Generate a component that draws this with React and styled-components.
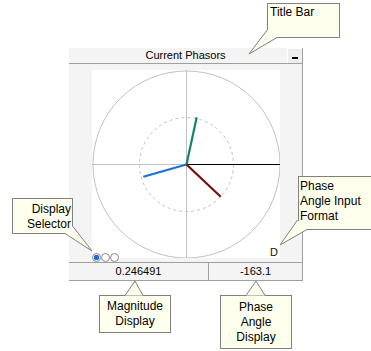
import React from "react";
import styled, { createGlobalStyle } from "styled-components";

const GlobalStyle = createGlobalStyle`
  html, body {
    margin: 0;
    padding: 0;
    background: #ffffff;
  }
  body {
    font-family: "Liberation Sans", Arial, sans-serif;
  }
`;

const Stage = styled.div`
  position: relative;
  width: 371px;
  height: 351px;
  overflow: hidden;
  padding: 48px 0 0 69px;
  box-sizing: border-box;
`;

const Panel = styled.div`
  width: 234px;
  box-sizing: border-box;
  border-right: 1px solid #a0a0a0;
  background: #f4f4f4;
`;

const TitleBar = styled.div`
  display: flex;
  height: 16px;
  box-sizing: border-box;
  border-bottom: 1px solid #a0a0a0;
`;

const Spacer = styled.div`
  width: 15px;
`;

const Title = styled.div`
  flex: 1;
  text-align: center;
  font-size: 11px;
  line-height: 15px;
  color: #000;
`;

const MinButton = styled.div`
  width: 15px;
  height: 15px;
  box-sizing: border-box;
  border-top: 1px solid #ffffff;
  border-left: 1px solid #ffffff;
  background: #ededed;
  display: flex;
  align-items: center;
  justify-content: center;

  &::after {
    content: "";
    width: 6px;
    height: 2px;
    margin-top: 3px;
    background: #000;
  }
`;

const Body = styled.div`
  position: relative;
  height: 198px;
  box-sizing: border-box;
  padding: 6px 22px 4px 23px;
`;

const Plot = styled.svg`
  display: block;
  background: #ffffff;
`;

const Selector = styled.div`
  position: absolute;
  left: 23px;
  bottom: 0px;
  display: flex;
`;

const Dot = styled.div`
  width: 9px;
  height: 9px;
  box-sizing: border-box;
  border-radius: 50%;
  border: 1px solid #8c8c8c;
  background: ${(p) => (p.$active ? "radial-gradient(circle, #1d6fd6 0 2.6px, #ffffff 3px)" : "#ffffff")};
`;

const FormatLabel = styled.div`
  position: absolute;
  right: 24px;
  bottom: 4px;
  font-size: 11px;
  line-height: 11px;
  color: #111;
`;

const Footer = styled.div`
  display: flex;
  height: 19px;
  box-sizing: border-box;
  border-top: 1px solid #a0a0a0;
  border-bottom: 1px solid #a0a0a0;
`;

const Cell = styled.div`
  width: ${(p) => p.$width}px;
  border-right: ${(p) => (p.$divider ? "1px solid #a0a0a0" : "none")};
  text-align: center;
  font-size: 11px;
  line-height: 17px;
  color: #000;
`;

const Callout = styled.div`
  position: absolute;
  left: ${(p) => p.$x}px;
  top: ${(p) => p.$y}px;
  width: ${(p) => p.$w}px;
  height: ${(p) => p.$h}px;
  box-sizing: border-box;
  border: 1px solid #808080;
  background: #ffffee;
  font-size: 12px;
  line-height: 15px;
  color: #000;
  padding: ${(p) => p.$pad || "1px 2px"};
  text-align: ${(p) => p.$align || "left"};
  display: flex;
  flex-direction: column;
  justify-content: ${(p) => (p.$center ? "center" : "flex-start")};
`;

const Tails = styled.svg`
  position: absolute;
  left: 0;
  top: 0;
  pointer-events: none;
`;

const tails = [
  [[267.5, 29.5], [249, 54], [277, 37.5]],
  [[65, 233.5], [92, 251], [72.5, 226]],
  [[297.5, 220], [280, 245], [307, 229.5]],
  [[125, 295.5], [135, 281], [143, 295.5]],
  [[246, 295.5], [256, 281], [265, 295.5]],
];

const cx = 94.5;
const cy = 94.5;

const phasors = [
  { x: 104.7, y: 47.3, color: "#13836a" },
  { x: 51.3, y: 106.7, color: "#1b72d6" },
  { x: 128.7, y: 126.7, color: "#7a0c0c" },
];

const App = () => {
  return (
    <>
      <GlobalStyle />
      <Stage>
        <Panel>
          <TitleBar>
            <Spacer />
            <Title>Current Phasors</Title>
            <MinButton />
          </TitleBar>
          <Body>
            <Plot width="188" height="188" viewBox="0 0 188 188">
              <circle cx={cx} cy={cy} r="93.5" fill="none" stroke="#c4c0c0" strokeWidth="1" />
              <circle cx={cx} cy={cy} r="47" fill="none" stroke="#c4c0c0" strokeWidth="1" strokeDasharray="3 3" />
              <line x1={cx} y1="0" x2={cx} y2="188" stroke="#c4c0c0" strokeWidth="1" />
              <line x1="0" y1={cy} x2={cx} y2={cy} stroke="#c4c0c0" strokeWidth="1" />
              <line x1={cx} y1={cy} x2="188" y2={cy} stroke="#000" strokeWidth="1" />
              {phasors.map((p) => (
                <line key={p.color} x1={cx} y1={cy} x2={p.x} y2={p.y} stroke={p.color} strokeWidth="2.2" />
              ))}
            </Plot>
            <Selector>
              <Dot $active />
              <Dot />
              <Dot />
            </Selector>
            <FormatLabel>D</FormatLabel>
          </Body>
          <Footer>
            <Cell $width={139} $divider>0.246491</Cell>
            <Cell $width={93}>-163.1</Cell>
          </Footer>
        </Panel>

        <Callout $x={267} $y={3} $w={73} $h={35} $pad="1px 2px">
          Title Bar
        </Callout>
        <Callout $x={12} $y={198} $w={61} $h={36} $pad="3px 1px" $align="right">
          <span>Display</span>
          <span>Selector</span>
        </Callout>
        <Callout $x={298} $y={176} $w={82} $h={54} $pad="2px 1px">
          <span>Phase</span>
          <span>Angle Input</span>
          <span>Format</span>
        </Callout>
        <Callout $x={99} $y={295} $w={72} $h={38} $align="center" $center>
          <span>Magnitude</span>
          <span>Display</span>
        </Callout>
        <Callout $x={220} $y={295} $w={72} $h={54} $align="center" $center $pad="0 2px">
          <span>Phase</span>
          <span>Angle</span>
          <span>Display</span>
        </Callout>

        <Tails width="371" height="351" viewBox="0 0 371 351">
          {tails.map((t, i) => {
            const pts = t.map((p) => p.join(",")).join(" ");
            return (
              <g key={i}>
                <polygon points={pts} fill="#ffffee" />
                <polyline points={pts} fill="none" stroke="#808080" strokeWidth="1" />
              </g>
            );
          })}
        </Tails>
      </Stage>
    </>
  );
};

export default App;
